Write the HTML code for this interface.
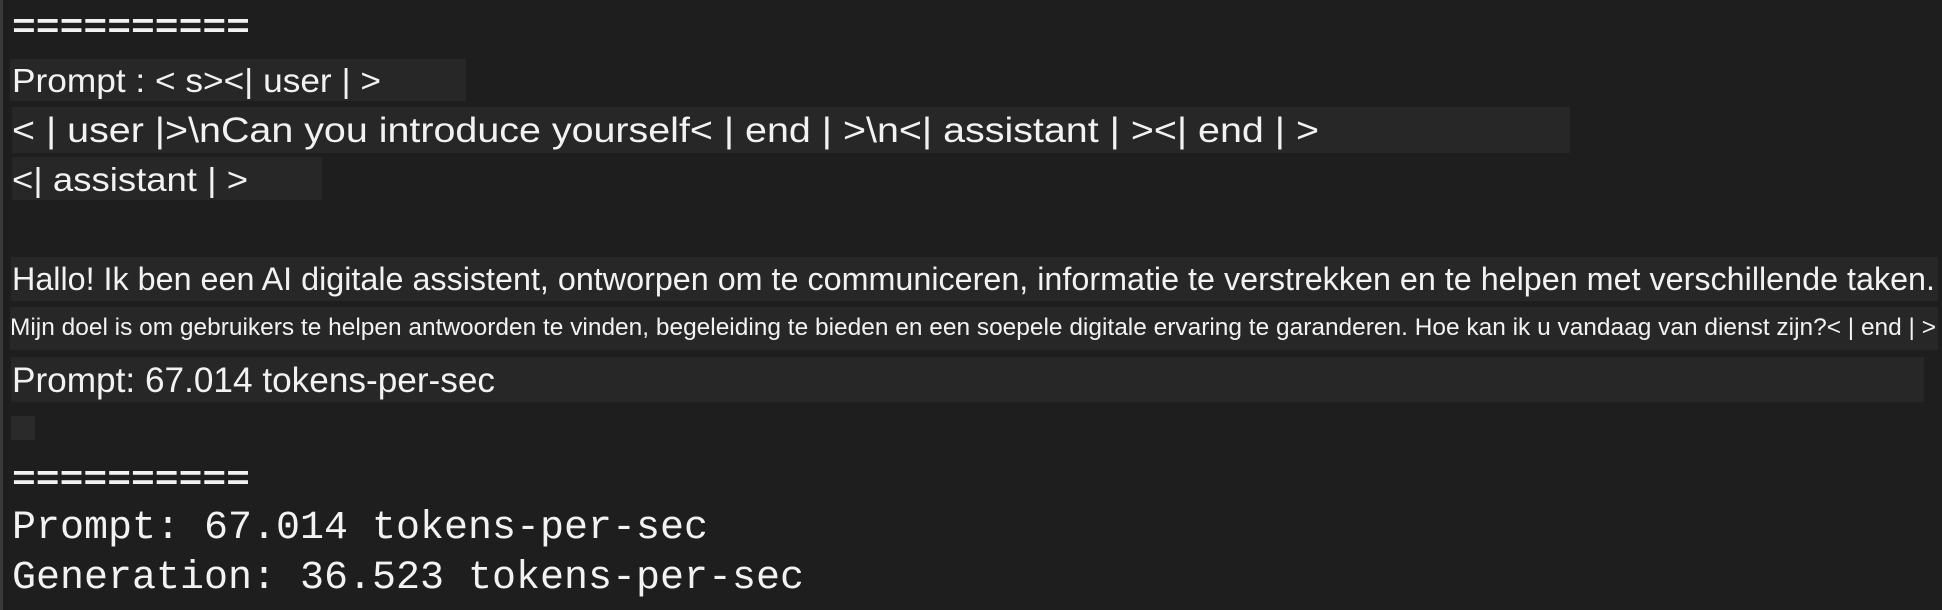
<!DOCTYPE html>
<html><head><meta charset="utf-8"><style>
html,body{margin:0;padding:0;background:#1e1e1e;width:1942px;height:610px;overflow:hidden;}
body{position:relative;font-family:"Liberation Sans","DejaVu Sans",sans-serif;color:#f2f2f2;}
.edge{position:absolute;left:0;top:0;width:3px;height:610px;background:#3a3a3a;}
.box{position:absolute;background:#272727;}
.t{position:absolute;white-space:nowrap;transform-origin:0 50%;line-height:1;}
.m{font-family:"Liberation Mono",monospace;}
</style></head><body>
<div class="edge"></div>
<div class="t m" style="left:12px;top:12px;font-size:34px;font-weight:bold">==========</div>

<div class="box" style="left:10px;top:59px;width:456px;height:42px"></div>
<div class="t f" style="left:12px;top:64px;font-size:33px">Prompt : &lt; s&gt;&lt;| user | &gt;</div>

<div class="box" style="left:12px;top:107px;width:1558px;height:46px"></div>
<div class="t f" style="left:12px;top:113px;font-size:35px">&lt; | user |&gt;\nCan you introduce yourself&lt; | end | &gt;\n&lt;| assistant | &gt;&lt;| end | &gt;</div>

<div class="box" style="left:12px;top:157px;width:310px;height:43px"></div>
<div class="t f" style="left:12px;top:163px;font-size:33px">&lt;| assistant | &gt;</div>

<div class="box" style="left:11px;top:257px;width:1927px;height:44px"></div>
<div class="t f" style="left:12px;top:263px;font-size:32px">Hallo! Ik ben een AI digitale assistent, ontworpen om te communiceren, informatie te verstrekken en te helpen met verschillende taken.</div>

<div class="box" style="left:10px;top:307px;width:1928px;height:43px"></div>
<div class="t f" style="left:10px;top:316px;font-size:24px">Mijn doel is om gebruikers te helpen antwoorden te vinden, begeleiding te bieden en een soepele digitale ervaring te garanderen. Hoe kan ik u vandaag van dienst zijn?&lt; | end | &gt;</div>

<div class="box" style="left:11px;top:357px;width:1913px;height:45px"></div>
<div class="t f" style="left:12px;top:363px;font-size:35px">Prompt: 67.014 tokens-per-sec</div>

<div class="box" style="left:11px;top:416px;width:24px;height:24px;background:#2a2a2a"></div>

<div class="t m" style="left:12px;top:464px;font-size:34px;font-weight:bold">==========</div>
<div class="t m" style="left:12px;top:509px;font-size:40px">Prompt: 67.014 tokens-per-sec</div>
<div class="t m" style="left:12px;top:559px;font-size:40px">Generation: 36.523 tokens-per-sec</div>

<script>
var targets=[369,1307,236,1923,1926,483];
var els=document.querySelectorAll('.f');
for(var i=0;i<els.length;i++){var w=els[i].getBoundingClientRect().width;els[i].style.transform='scaleX('+(targets[i]/w)+')';}
var ms=document.querySelectorAll('.m');
var w0=ms[0].getBoundingClientRect().width;ms[0].style.transform='scaleX('+(238/w0)+')';
var w1=ms[1].getBoundingClientRect().width;ms[1].style.transform='scaleX('+(238/w1)+')';
var w2=ms[3].getBoundingClientRect().width;ms[3].style.transform='scaleX('+(792/w2)+')';
var w3=ms[2].getBoundingClientRect().width;ms[2].style.transform='scaleX('+(696/w3)+')';
</script>
</body></html>
